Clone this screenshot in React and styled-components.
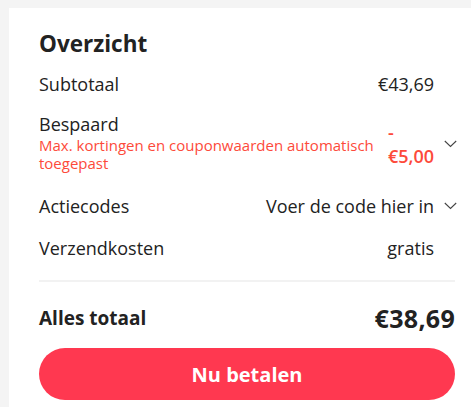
import React from 'react';
import styled, { createGlobalStyle } from 'styled-components';

const GlobalStyle = createGlobalStyle`
  html, body {
    margin: 0;
    padding: 0;
    background: #f4f4f4;
    font-family: "Open Sans", "Noto Sans", sans-serif;
    color: #222;
    overflow: hidden;
  }
`;

const Page = styled.div`
  padding: 8px 0 0 9px;
  width: 471px;
  height: 407px;
  box-sizing: border-box;
  overflow: hidden;
`;

const Card = styled.div`
  background: #fff;
  width: 490px;
  min-height: 420px;
  box-sizing: border-box;
  padding: 22px 0 0 30px;
`;

const Content = styled.div`
  width: 416px;
`;

const Title = styled.h2`
  margin: 0 0 14px;
  font-size: 22.5px;
  font-weight: 700;
  line-height: 28px;
  color: #222;
`;

const Row = styled.div`
  display: grid;
  grid-template-columns: 1fr auto 20px;
  align-items: center;
  padding: ${p => p.$pad || '9px 0'};
  font-size: 18px;
  line-height: 24px;
`;

const Label = styled.div`
  color: #222;
`;

const Note = styled.div`
  color: #fd4a3a;
  font-size: 15px;
  line-height: 18px;
  max-width: 345px;
`;

const Value = styled.div`
  text-align: ${p => (p.$red ? 'left' : 'right')};
  color: ${p => (p.$red ? '#fd4a3a' : '#222')};
  font-weight: ${p => (p.$red ? 600 : 400)};
  padding-right: 1px;
  margin-top: ${p => (p.$red ? '3px' : '0')};
`;

const ChevronSlot = styled.div`
  display: flex;
  justify-content: flex-end;
  margin-right: -2px;
  margin-top: ${p => (p.$down ? '4px' : '0')};
`;

const Divider = styled.div`
  height: 2px;
  background: #f2f2f2;
  margin: 20px 0 0;
`;

const TotalRow = styled.div`
  display: flex;
  justify-content: space-between;
  align-items: center;
  padding: 19px 0 13px;
  line-height: 34px;
`;

const TotalLabel = styled.div`
  font-size: 19px;
  font-weight: 700;
  color: #222;
`;

const TotalValue = styled.div`
  font-size: 25px;
  font-weight: 700;
  color: #222;
  letter-spacing: 0.3px;
`;

const PayButton = styled.button`
  display: block;
  width: 416px;
  height: 52px;
  border: none;
  border-radius: 26px;
  background: #ff3850;
  color: #fff;
  font-family: inherit;
  font-size: 20px;
  font-weight: 700;
  cursor: pointer;
`;

const Chevron = () => (
  <svg width="13" height="8" viewBox="0 0 13 8" fill="none">
    <path d="M0.8 1 L6.5 6.5 L12.2 1" stroke="#444" strokeWidth="1.1" />
  </svg>
);

export default function App() {
  return (
    <>
      <GlobalStyle />
      <Page>
        <Card>
          <Content>
            <Title>Overzicht</Title>
            <Row $pad="0 0 8px">
              <Label>Subtotaal</Label>
              <Value>€43,69</Value>
              <span />
            </Row>
            <Row $pad="8px 0 11px">
              <div>
                <Label>Bespaard</Label>
                <Note>Max. kortingen en couponwaarden automatisch toegepast</Note>
              </div>
              <Value $red>
                <div>-</div>
                <div>€5,00</div>
              </Value>
              <ChevronSlot $down><Chevron /></ChevronSlot>
            </Row>
            <Row $pad="11px 0 9px">
              <Label>Actiecodes</Label>
              <Value>Voer de code hier in</Value>
              <ChevronSlot><Chevron /></ChevronSlot>
            </Row>
            <Row $pad="9px 0 0">
              <Label>Verzendkosten</Label>
              <Value>gratis</Value>
              <span />
            </Row>
            <Divider />
            <TotalRow>
              <TotalLabel>Alles totaal</TotalLabel>
              <TotalValue>€38,69</TotalValue>
            </TotalRow>
            <PayButton>Nu betalen</PayButton>
          </Content>
        </Card>
      </Page>
    </>
  );
}
